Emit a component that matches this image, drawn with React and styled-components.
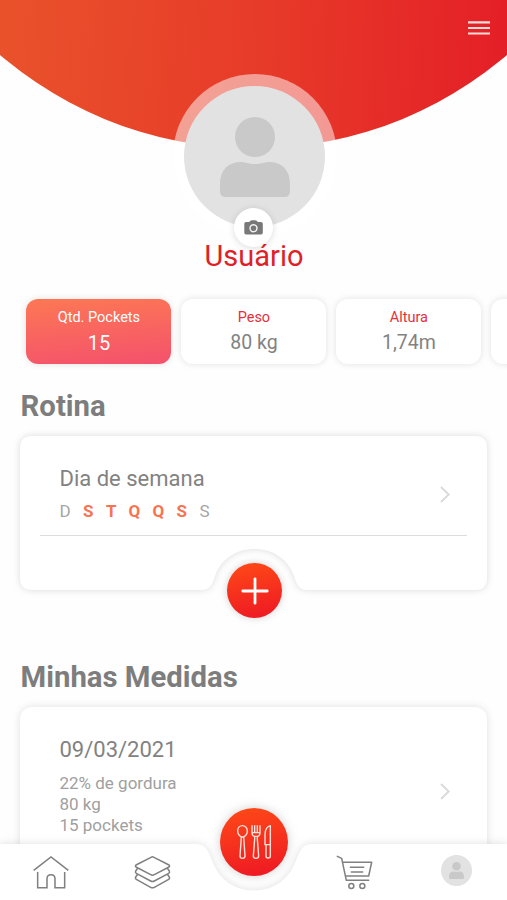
import React from 'react'
import styled, { createGlobalStyle, css } from 'styled-components'

const stats = [
    { label: 'Qtd. Pockets', value: '15', active: true },
    { label: 'Peso', value: '80 kg' },
    { label: 'Altura', value: '1,74m' },
    { label: '', value: '' },
]

const days = [
    { letter: 'D', on: false, width: 23.5 },
    { letter: 'S', on: true, width: 23 },
    { letter: 'T', on: true, width: 22.5 },
    { letter: 'Q', on: true, width: 24 },
    { letter: 'Q', on: true, width: 24 },
    { letter: 'S', on: true, width: 23 },
    { letter: 'S', on: false, width: 16 },
]

const PersonIcon = ({ size }) => (
    <svg width={size} height={size} viewBox='0 0 80 80' fill='#c9c9c9'>
        <circle cx='40' cy='20' r='20' />
        <path d='M26 45 C30 45 33 47 40 47 C47 47 50 45 54 45 C67 45 75 53 75 67 V74 C75 78 73 80 69 80 H11 C7 80 5 78 5 74 V67 C5 53 13 45 26 45 Z' />
    </svg>
)

const MenuIcon = () => (
    <svg width='22' height='14' viewBox='0 0 22 14' stroke='#fbdcd9' strokeWidth='2.2'>
        <path d='M0 1.3H22M0 7H22M0 12.5H22' />
    </svg>
)

const CameraIcon = () => (
    <svg width='19' height='15' viewBox='0 0 19 15'>
        <path fill='#787878' d='M2 2H5.2L6.4 .8Q7 .2 8 .2H11.2Q12 .2 12.7 .8L13.8 2H17Q18.8 2 18.8 3.8V12.8Q18.8 14.6 17 14.6H2Q.3 14.6 .3 12.8V3.8Q.3 2 2 2Z' />
        <circle cx='9.5' cy='8.2' r='3.5' fill='none' stroke='#f4f4f4' strokeWidth='1.4' />
    </svg>
)

const ChevronIcon = () => (
    <svg width='10' height='17' viewBox='0 0 10 17' fill='none' stroke='#d9d9d9' strokeWidth='1.8'>
        <path d='M1 1L8.7 8.5L1 16' />
    </svg>
)

const PlusIcon = () => (
    <svg width='28' height='28' viewBox='0 0 28 28' stroke='#fff' strokeWidth='2.8' strokeLinecap='round'>
        <path d='M14 1.800V26.200M1.800 14H26.200' />
    </svg>
)

const HomeIcon = () => (
    <svg width='36' height='34' viewBox='0 0 108 102' fill='none' stroke='#808080' strokeWidth='4.6'>
        <path d='M2 46L54 6L106 46' />
        <path d='M14 51V98H42V71Q42 59 54 59Q66 59 66 71V98H95V51' />
    </svg>
)

const LayersIcon = () => (
    <svg width='37' height='34' viewBox='0 0 111 102' fill='none' stroke='#808080' strokeWidth='4.6' strokeLinejoin='round'>
        <path d='M51 7Q55.5 4 60 7L105 30Q108 33 105 36L61 59Q55.5 62 50 59L6 36Q3 33 6 30Z' />
        <path d='M11 40L5 48Q3 52 7 55L50 78Q55.5 81 61 78L104 55Q108 52 106 48L100 40' />
        <path d='M11 58L5 66Q3 70 7 73L50 97Q55.5 100 61 97L104 73Q108 70 106 66L100 58' />
    </svg>
)

const CartIcon = () => (
    <svg width='37' height='35' viewBox='0 0 111 105' fill='none' stroke='#808080' strokeWidth='4.6' strokeLinecap='round' strokeLinejoin='round'>
        <path d='M4 4L17 10L31 76H98' />
        <path d='M21 22H107L98 63H29M43 37H83M46 51H80' />
        <circle cx='46' cy='93' r='7.5' />
        <circle cx='79' cy='93' r='7.5' />
    </svg>
)

const CutleryIcon = () => (
    <svg width='38' height='36' viewBox='165 101 114 108' fill='none' stroke='#ffe3da' strokeWidth='4.2' strokeLinejoin='round'>
        <path d='M184 140C177 136 173 130 173 122C173 112 180 106 187 106C194 106 202 112 202 122C202 130 198 136 191 140Z' />
        <path d='M184 140L180 197Q180 204 187.500 204Q195 204 195 197L191 140' />
        <path d='M216 105V126Q216 137 223 138H233Q240 137 240 126V105M224 105V127M232 105V127M216 127H240' />
        <path d='M224 139V146L220 197Q220 204 228 204Q236 204 236 197L232 146V139' />
        <path d='M271 106V163H255V133C255 119 261 109 271 106Z' />
        <path d='M258 163V197Q258 203 264.500 203Q271 203 271 197V163' />
    </svg>
)

const App = () => {
    return (
        <Screen>
            <GlobalStyle />
            <Header>
                <MenuButton><MenuIcon /></MenuButton>
                <AvatarRing>
                    <Avatar><PersonIcon size={80} /></Avatar>
                    <CameraButton><CameraIcon /></CameraButton>
                </AvatarRing>
                <UserName>Usuário</UserName>
            </Header>

            <Stats>
                {stats.map((stat, i) => (
                    <StatCard key={i} $active={stat.active}>
                        <StatLabel $active={stat.active}>{stat.label}</StatLabel>
                        <StatValue $active={stat.active}>{stat.value}</StatValue>
                    </StatCard>
                ))}
            </Stats>

            <Section>
                <SectionTitle>Rotina</SectionTitle>
                <RoutineShadow>
                    <RoutineCard>
                        <RoutineRow>
                            <div>
                                <ItemTitle>Dia de semana</ItemTitle>
                                <Days>
                                    {days.map((day, i) => (
                                        <Day key={i} $on={day.on} $width={day.width}>{day.letter}</Day>
                                    ))}
                                </Days>
                            </div>
                            <ChevronIcon />
                        </RoutineRow>
                    </RoutineCard>
                    <AddButton><PlusIcon /></AddButton>
                </RoutineShadow>
            </Section>

            <Section>
                <SectionTitle $spaced>Minhas Medidas</SectionTitle>
                <MeasureCard>
                    <div>
                        <ItemTitle>09/03/2021</ItemTitle>
                        <Detail>22% de gordura</Detail>
                        <Detail>80 kg</Detail>
                        <Detail>15 pockets</Detail>
                    </div>
                    <ChevronIcon />
                </MeasureCard>
            </Section>

            <BottomNav>
                <NavBar>
                    <NavItem><HomeIcon /></NavItem>
                    <NavItem><LayersIcon /></NavItem>
                    <NavItem />
                    <NavItem><CartIcon /></NavItem>
                    <NavItem $raised>
                        <NavAvatar><PersonIcon size={17} /></NavAvatar>
                    </NavItem>
                </NavBar>
                <MealButton><CutleryIcon /></MealButton>
            </BottomNav>
        </Screen>
    )
}

export default App

const GlobalStyle = createGlobalStyle`
    *{
        box-sizing: border-box;
        margin: 0;
        padding: 0;
    }

    body{
        background: #fefefe;
        font-family: Roboto, "Liberation Sans", sans-serif;
        overflow: hidden;
    }

    svg{
        display: block;
        flex-shrink: 0;
    }

    button{
        border: none;
        background: none;
    }
`

const round = css`
    display: flex;
    justify-content: center;
    align-items: center;
    border-radius: 50%;
`

const Screen = styled.main`
    position: relative;
    width: 507px;
    height: 900px;
    overflow: hidden;
    background: #fefefe;
`

const Header = styled.header`
    position: relative;
    display: flex;
    flex-direction: column;
    align-items: center;
    height: 289px;
    padding-top: 74px;

    &::before{
        content: '';
        position: absolute;
        inset: 0;
        background: linear-gradient(93deg, #e9522b 0%, #e73b29 50%, #e41e27 100%);
        clip-path: circle(390px at 50% -241.4px);
    }
`

const MenuButton = styled.button`
    position: absolute;
    top: 21px;
    right: 17px;
`

const AvatarRing = styled.div`
    ${round}
    position: relative;
    width: 164px;
    height: 164px;
    margin-left: 2px;
    background: rgba(255, 255, 255, 0.5);
`

const Avatar = styled.div`
    ${round}
    width: 141px;
    height: 141px;
    padding-top: 2px;
    background: #e2e2e2;
`

const CameraButton = styled.button`
    ${round}
    position: absolute;
    bottom: -9px;
    left: 61.5px;
    width: 39px;
    height: 39px;
    background: #fff;
    box-shadow: 0 1px 7px rgba(0, 0, 0, 0.14);
`

const UserName = styled.h1`
    position: relative;
    margin-top: 1px;
    padding-left: 1px;
    color: #e01f28;
    font-size: 29px;
    font-weight: 400;
    line-height: 34px;
`

const Stats = styled.div`
    display: flex;
    gap: 10px;
    padding: 10px 0 0 26.4px;
`

const StatCard = styled.div`
    display: flex;
    flex-direction: column;
    align-items: center;
    flex: 0 0 145px;
    height: 65px;
    padding-top: 10px;
    border-radius: 12px;
    background: ${({ $active }) => $active ? 'linear-gradient(175deg, #fd7854, #f4516c)' : '#fff'};
    box-shadow: 0 0 7px rgba(0, 0, 0, 0.12);
`

const StatLabel = styled.span`
    color: ${({ $active }) => $active ? '#fff' : '#e5303c'};
    font-size: 14.5px;
    line-height: 18px;
`

const StatValue = styled.span`
    margin-top: 4px;
    color: ${({ $active }) => $active ? '#fff' : '#828282'};
    font-size: ${({ $active }) => $active ? '20px' : '19.5px'};
    font-weight: 400;
    line-height: 24px;
`

const Section = styled.section`
    padding: 0 20px;
`

const SectionTitle = styled.h2`
    padding-top: ${({ $spaced }) => $spaced ? '70px' : '25px'};
    padding-left: 0.6px;
    color: #7d7d7d;
    font-size: 29.3px;
    font-weight: 700;
    line-height: 34px;
`

const RoutineShadow = styled.div`
    position: relative;
    margin-top: 13px;
    filter: drop-shadow(0 0 3.5px rgba(0, 0, 0, 0.14));
`

/* Card with a round cut in the lower edge for the add button */
const RoutineCard = styled.div`
    height: 154px;
    padding: 0 20px;
    background: #fff;
    clip-path: path('M12 0H455Q467 0 467 12V142Q467 154 455 154H287C279 154 276 147 274 140C268 123 253 113 234.500 113C216 113 201 123 195 140C193 147 190 154 182 154H12Q0 154 0 142V12Q0 0 12 0Z');
`

const RoutineRow = styled.div`
    display: flex;
    justify-content: space-between;
    align-items: center;
    height: 100px;
    padding: 18px 17px 0 19.5px;
    border-bottom: 1.5px solid #dcdcdc;
`

const ItemTitle = styled.h3`
    color: #828282;
    font-size: 22px;
    font-weight: 400;
    line-height: 28px;
`

const Days = styled.div`
    display: flex;
    margin: 7px 0 3px;
    line-height: 22px;
`

const Day = styled.span`
    width: ${({ $width }) => $width}px;
    color: ${({ $on }) => $on ? '#fa7350' : '#a5a5a5'};
    font-size: 17px;
    font-weight: ${({ $on }) => $on ? 700 : 400};
`

const AddButton = styled.button`
    ${round}
    position: absolute;
    left: 207px;
    bottom: -28px;
    width: 55px;
    height: 55px;
    background: linear-gradient(170deg, #ff4a17, #ed1724);
    box-shadow: 0 0 12px rgba(0, 0, 0, 0.05);
`

const MeasureCard = styled.div`
    display: flex;
    justify-content: space-between;
    align-items: flex-start;
    height: 220px;
    margin-top: 13px;
    padding: 29px 37px 0 39.5px;
    border-radius: 12px;
    background: #fff;
    box-shadow: 0 0 8px rgba(0, 0, 0, 0.12);

    > svg{
        margin-top: 47px;
    }
`

const Detail = styled.p`
    color: #a0a0a0;
    font-size: 17px;
    line-height: 21px;

    ${ItemTitle} + &{
        margin-top: 8.5px;
    }
`

const BottomNav = styled.nav`
    position: absolute;
    left: 0;
    bottom: 0;
    width: 100%;
    filter: drop-shadow(0 0 4px rgba(0, 0, 0, 0.13));
`

const NavBar = styled.div`
    display: grid;
    grid-template-columns: repeat(5, 1fr);
    height: 56px;
    background: #fff;
    clip-path: path('M0 0H195C205 0 208 6 211 14C218 35 234 46.500 254 46.500C274 46.500 290 35 297 14C300 6 303 0 313 0H507V56H0Z');
`

const NavItem = styled.div`
    display: flex;
    justify-content: center;
    align-items: center;
    padding-bottom: ${({ $raised }) => $raised ? '4px' : '0'};
`

const NavAvatar = styled.div`
    ${round}
    width: 31px;
    height: 31px;
    background: #e2e2e2;
`

const MealButton = styled.button`
    ${round}
    position: absolute;
    left: 220px;
    bottom: 24.5px;
    width: 68px;
    height: 68px;
    background: linear-gradient(170deg, #ff4a17, #ed1724);
    box-shadow: 0 0 16px rgba(0, 0, 0, 0.07);
`
